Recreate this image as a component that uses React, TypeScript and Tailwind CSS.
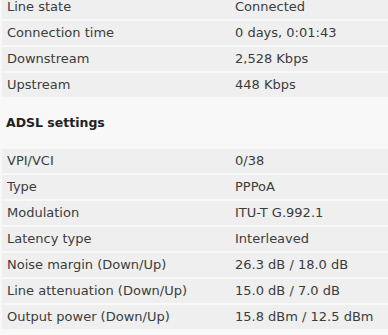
const lineRows: [string, string][] = [
  ["Line state", "Connected"],
  ["Connection time", "0 days, 0:01:43"],
  ["Downstream", "2,528 Kbps"],
  ["Upstream", "448 Kbps"],
];

const adslRows: [string, string][] = [
  ["VPI/VCI", "0/38"],
  ["Type", "PPPoA"],
  ["Modulation", "ITU-T G.992.1"],
  ["Latency type", "Interleaved"],
  ["Noise margin (Down/Up)", "26.3 dB / 18.0 dB"],
  ["Line attenuation (Down/Up)", "15.0 dB / 7.0 dB"],
  ["Output power (Down/Up)", "15.8 dBm / 12.5 dBm"],
];

function Row({ label, value }: { label: string; value: string }) {
  return (
    <div className="flex h-[24px] items-center bg-[#efefef] text-[13px] text-[#3c3c3c]">
      <div className="w-[233px] pl-[5px]">{label}</div>
      <div className="flex-1">{value}</div>
    </div>
  );
}

export default function App() {
  return (
    <div
      className="h-[335px] w-[388px] overflow-hidden bg-[#f8f8f8] pl-[2px]"
      style={{ fontFamily: '"DejaVu Sans", Verdana, sans-serif' }}
    >
      <div className="-mt-[5px] flex flex-col gap-[2px]">
        {lineRows.map(([l, v]) => (
          <Row key={l} label={l} value={v} />
        ))}
      </div>
      <div className="flex h-[52px] items-center pl-[4px] text-[12.5px] font-bold text-[#222222]">
        ADSL settings
      </div>
      <div className="flex flex-col gap-[2px]">
        {adslRows.map(([l, v]) => (
          <Row key={l} label={l} value={v} />
        ))}
      </div>
    </div>
  );
}
